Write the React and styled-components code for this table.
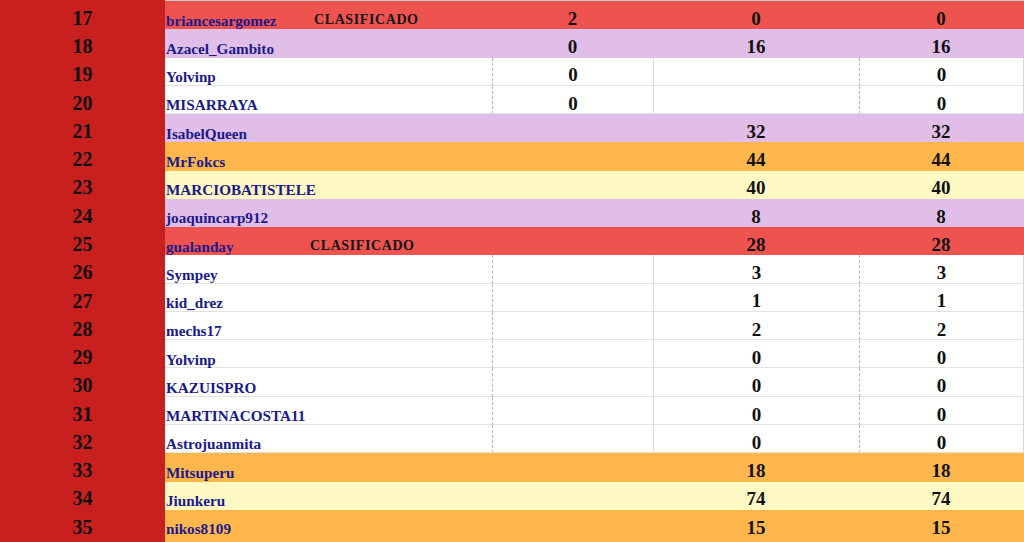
import React from "react";
import styled, { createGlobalStyle, css } from "styled-components";

const Global = createGlobalStyle`
  html, body { margin: 0; padding: 0; background: #ffffff; overflow: hidden; }
  body { font-family: "Liberation Serif", "Times New Roman", serif; }
`;

const ROW_BG = {
  red: "#ef5350",
  lavender: "#e1bee7",
  orange: "#ffb74d",
  yellow: "#fff9c4",
  white: "#ffffff",
};

const Sheet = styled.div`
  display: flex;
  flex-direction: column;
  width: 1024px;
  height: 542px;
  overflow: hidden;
  padding-top: 1px;
  box-sizing: border-box;
  background: linear-gradient(to right, #c8201e 165px, #c8c8c8 165px) top / 100% 1px no-repeat;
`;

const Row = styled.div`
  display: grid;
  grid-template-columns: 165px 327px 161px 206px 164px 1px;
  height: 28.28px;
  flex: 0 0 auto;
  background: ${(p) => ROW_BG[p.$tone]};
  box-sizing: border-box;
  &:last-child {
    flex: 1 0 auto;
  }
`;

const Rank = styled.div`
  background: #c8201e;
  display: flex;
  align-items: flex-start;
  justify-content: center;
  padding-top: 6.9px;
  font-size: 20px;
  line-height: 1;
  font-weight: 700;
  color: #111;
  box-sizing: border-box;
`;

const gridLine = css`
  ${(p) =>
    p.$white &&
    css`
      border-bottom: 1px solid #e2e2e2;
    `}
`;

const NameCell = styled.div`
  display: flex;
  align-items: flex-start;
  padding-left: 1px;
  box-sizing: border-box;
  ${gridLine}
`;

const Name = styled.span`
  display: inline-block;
  width: ${(p) => (p.$tagged ? "140px" : "auto")};
  font-size: 15.2px;
  line-height: 1;
  font-weight: 700;
  color: #1a1a8a;
  padding-top: 11.5px;
  white-space: nowrap;
`;

const Tag = styled.span`
  margin-left: ${(p) => p.$offset}px;
  font-size: 14px;
  line-height: 1;
  font-weight: 700;
  letter-spacing: 0.6px;
  color: #141414;
  padding-top: 12.2px;
  white-space: nowrap;
`;

const NumCell = styled.div`
  display: flex;
  align-items: flex-start;
  justify-content: center;
  box-sizing: border-box;
  padding-top: 7.8px;
  font-size: 19px;
  line-height: 1;
  font-weight: 700;
  color: #111;
  ${gridLine}
  ${(p) =>
    p.$white &&
    p.$edge === "dashed" &&
    css`
      border-left: 1px dashed #b9b9b9;
    `}
  ${(p) =>
    p.$white &&
    p.$edge === "solid" &&
    css`
      border-left: 1px solid #dcdcdc;
    `}
`;

const EdgeCell = styled.div`
  background: ${(p) => (p.$white ? "#d6d6d6" : "transparent")};
`;

const rows = [
  { n: 17, name: "briancesargomez", tag: 8, tone: "red", b: "2", c: "0", d: "0" },
  { n: 18, name: "Azacel_Gambito", tone: "lavender", b: "0", c: "16", d: "16" },
  { n: 19, name: "Yolvinp", tone: "white", b: "0", c: "", d: "0" },
  { n: 20, name: "MISARRAYA", tone: "white", b: "0", c: "", d: "0" },
  { n: 21, name: "IsabelQueen", tone: "lavender", b: "", c: "32", d: "32" },
  { n: 22, name: "MrFokcs", tone: "orange", b: "", c: "44", d: "44" },
  { n: 23, name: "MARCIOBATISTELE", tone: "yellow", b: "", c: "40", d: "40" },
  { n: 24, name: "joaquincarp912", tone: "lavender", b: "", c: "8", d: "8" },
  { n: 25, name: "gualanday", tag: 4, tone: "red", b: "", c: "28", d: "28" },
  { n: 26, name: "Sympey", tone: "white", b: "", c: "3", d: "3" },
  { n: 27, name: "kid_drez", tone: "white", b: "", c: "1", d: "1" },
  { n: 28, name: "mechs17", tone: "white", b: "", c: "2", d: "2" },
  { n: 29, name: "Yolvinp", tone: "white", b: "", c: "0", d: "0" },
  { n: 30, name: "KAZUISPRO", tone: "white", b: "", c: "0", d: "0" },
  { n: 31, name: "MARTINACOSTA11", tone: "white", b: "", c: "0", d: "0" },
  { n: 32, name: "Astrojuanmita", tone: "white", b: "", c: "0", d: "0" },
  { n: 33, name: "Mitsuperu", tone: "orange", b: "", c: "18", d: "18" },
  { n: 34, name: "Jiunkeru", tone: "yellow", b: "", c: "74", d: "74" },
  { n: 35, name: "nikos8109", tone: "orange", b: "", c: "15", d: "15" },
];

export default function App() {
  return (
    <>
      <Global />
      <Sheet>
        {rows.map((r) => {
          const white = r.tone === "white";
          return (
            <Row key={r.n} $tone={r.tone}>
              <Rank>{r.n}</Rank>
              <NameCell $white={white}>
                <Name $tagged={r.tag !== undefined}>{r.name}</Name>
                {r.tag !== undefined && <Tag $offset={r.tag}>CLASIFICADO</Tag>}
              </NameCell>
              <NumCell $white={white} $edge="dashed">{r.b}</NumCell>
              <NumCell $white={white} $edge="solid">{r.c}</NumCell>
              <NumCell $white={white} $edge="dashed">{r.d}</NumCell>
              <EdgeCell $white={white} />
            </Row>
          );
        })}
      </Sheet>
    </>
  );
}
